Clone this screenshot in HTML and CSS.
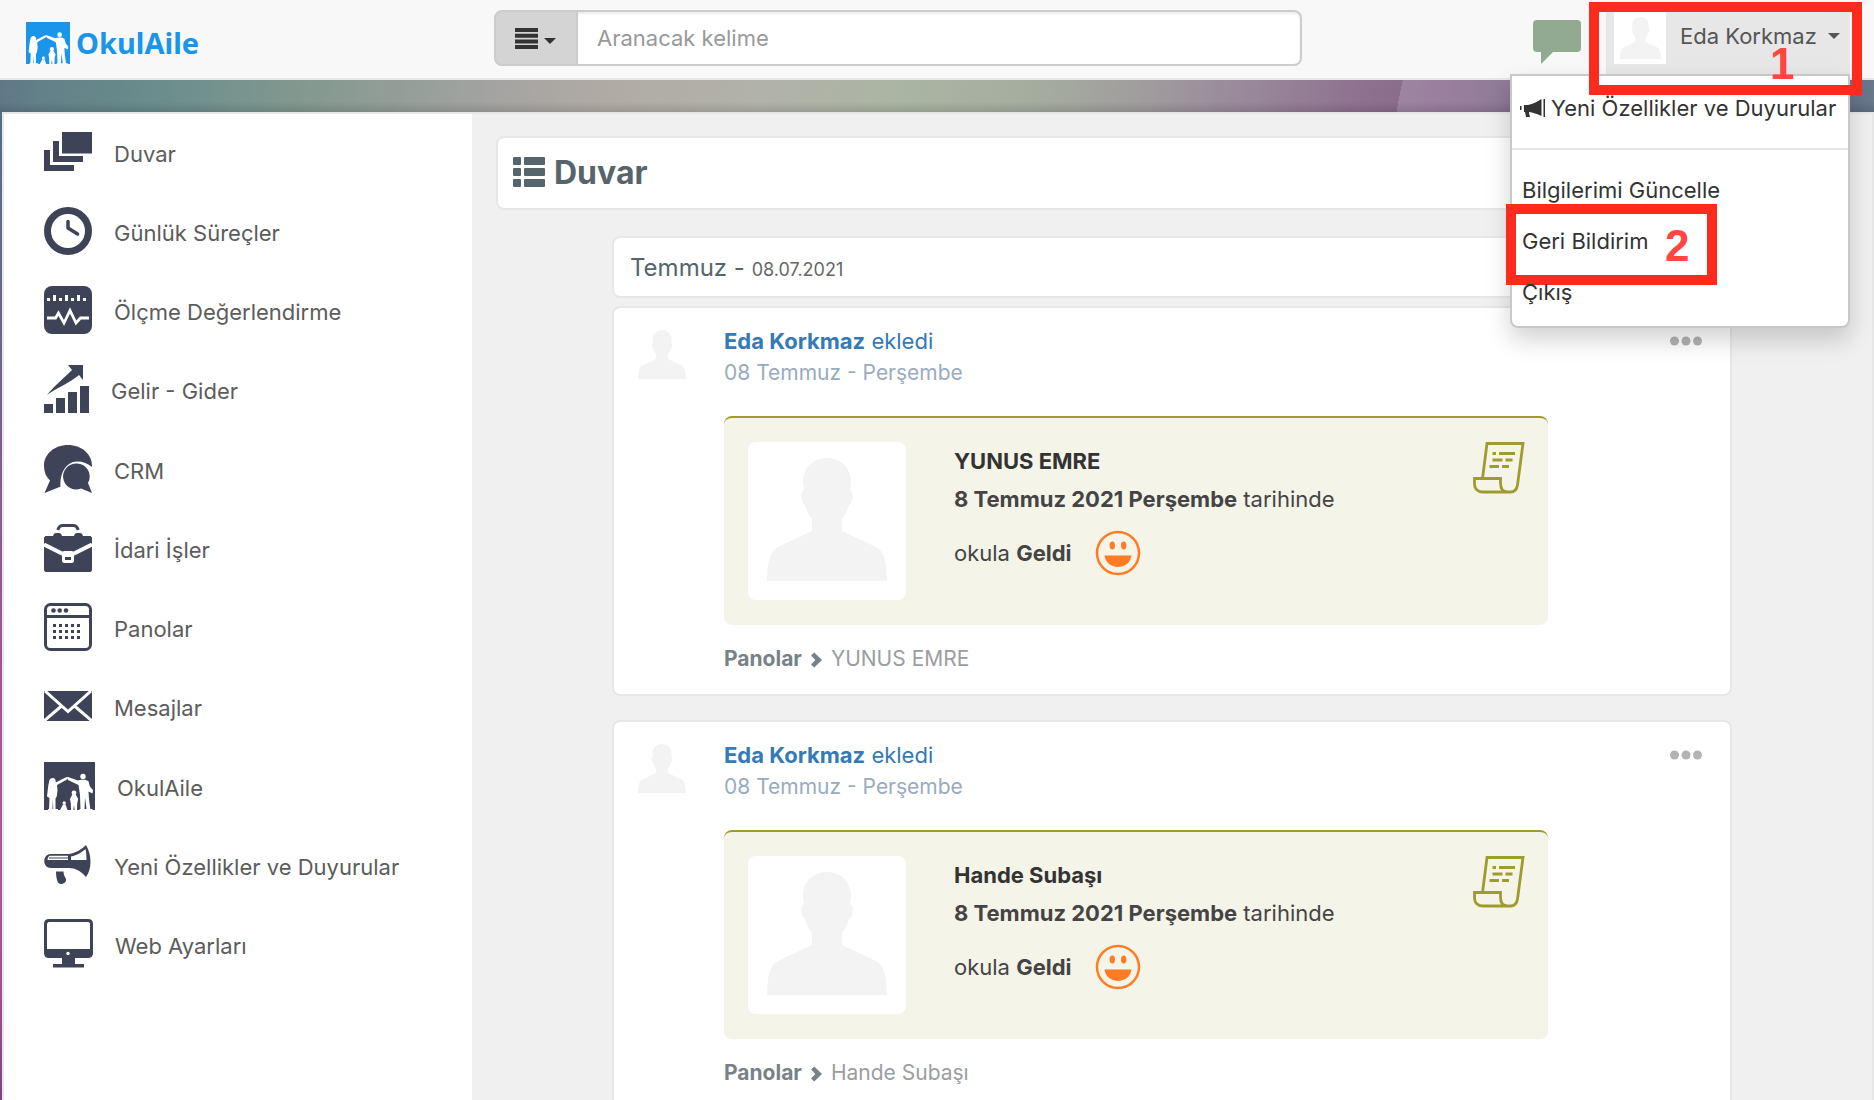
FILE: index.html
```html
<!DOCTYPE html>
<html lang="tr">
<head>
<meta charset="utf-8">
<meta name="viewport" content="width=device-width, initial-scale=1">
<title>OkulAile - Duvar</title>
<link rel="stylesheet" href="styles.css">
</head>
<body>
<svg class="sprite" aria-hidden="true">
  <symbol id="person" viewBox="0 0 120 123"><path d="M60 0C46 0 36 10 36 24L37 32C33 33 33 44 38 47C40 53 42 58 45 61V73L13 88C4 93 1 97 0 123H120C119 97 116 93 107 88L75 73V61C78 58 80 53 82 47C87 44 87 33 83 32L84 24C84 10 74 0 60 0Z"/></symbol>
  <symbol id="family" viewBox="0 0 51 48">
    <path fill="currentColor" d="M0 0h51v48H0z"/>
    <g fill="#fff">
      <path d="M8.500 16c2.500 0 3.500 2 3.200 4.500L22.500 15l1.700.8L23 17.500l-10 5.500.5 6-.8 5.500-1.200 2V48H9.300l-.4-10-.5 10H5l.5-12L3 34.500 4.200 24 5 20c.3-2.500 1.500-4 3.500-4z"/>
      <circle cx="39" cy="14.500" r="2.700"/>
      <path d="M23 15.500l1-.4L34 18.500l3-.8h4.500l3 1.500 1.500 5.500L49 28l-.5 3.500-4-2 .5 8L46.500 48h-3.800L41 35.500 40.500 48h-4L36 33l-1.500-10L24 18z"/>
      <circle cx="30" cy="31" r="2.400"/>
      <path d="M28 33h4l2.200 4-1 4.500L33 48h-2.400l-.6-5-.7 5H27l-.2-6.500L26 37z"/>
      <circle cx="20.200" cy="41" r="1.700"/>
      <path d="M19 42.500h2.500L23.500 48H16z"/>
      <path d="M4 47h10v1H4zM35.500 47h13v1h-13z"/>
    </g>
  </symbol>
  <symbol id="smile" viewBox="0 0 46 46">
    <circle cx="23" cy="23" r="21" fill="none" stroke="#ff7b24" stroke-width="2.500"/>
    <ellipse cx="17.300" cy="15.500" rx="2.700" ry="4" fill="#ff7b24"/><ellipse cx="28.700" cy="15.500" rx="2.700" ry="4" fill="#ff7b24"/>
    <path fill="#ff7b24" d="M9.500 25.500h27C36 32 30 37 23 37S10 32 9.500 25.500z"/>
  </symbol>
  <symbol id="scroll" viewBox="0 0 52 52">
    <path fill="none" stroke="#9f9c2e" stroke-width="2.800" d="M9.500 36.500L14 1.500h36L44.500 43c-.6 4-3 7-7 7H10c-5.500 0-8.500-3.500-8.500-8v-5.500h26V41c0 5.500 2.500 9 7 9"/>
    <path fill="none" stroke="#9f9c2e" stroke-width="3" d="M19.500 11.500h3.500M26 11.500h16M19.500 18h10M32.500 18h7M16.500 24.500h9.500M29 24.500h7"/>
  </symbol>
  <symbol id="dots" viewBox="0 0 32 10"><circle cx="4.500" cy="5" r="4.500"/><circle cx="16" cy="5" r="4.500"/><circle cx="27.500" cy="5" r="4.500"/></symbol>
  <symbol id="chevron" viewBox="0 0 11 16"><path d="M0 3.500L3.300.5 11 8l-7.700 7.500L0 12.500 4.300 8z"/></symbol>
</svg>

<header class="topbar">
  <a class="brand" href="#">
    <svg class="brand-icon" viewBox="0 0 51 48" preserveAspectRatio="none" aria-hidden="true"><use href="#family"/></svg>
    <span>OkulAile</span>
  </a>
  <form class="search">
    <button class="search-type" type="button" aria-label="Arama türü">
      <svg width="23" height="21" viewBox="0 0 23 21" aria-hidden="true"><path d="M0 0h23v4H0zM0 5.700h23v4H0zM0 11.400h23v4H0zM0 17h23v4H0z"/></svg>
      <span class="caret"></span>
    </button>
    <input class="search-input" type="text" placeholder="Aranacak kelime" aria-label="Aranacak kelime">
  </form>
  <div class="tools">
    <a class="chat" href="#" aria-label="Sohbet">
      <svg width="48" height="44" viewBox="0 0 48 44" aria-hidden="true"><path d="M4 0h40q4 0 4 4v24q0 4-4 4H20L8 44V32H4q-4 0-4-4V4q0-4 4-4z"/></svg>
    </a>
    <div class="user">
      <button class="user-button" type="button" aria-expanded="true">
        <span class="user-photo"><svg width="41" height="42" aria-hidden="true"><use href="#person"/></svg></span>
        <span class="user-name">Eda Korkmaz</span>
        <span class="caret"></span>
      </button>
      <ul class="menu">
        <li class="menu-news"><a href="#">
          <svg width="26" height="18" viewBox="0 0 26 18" aria-hidden="true"><path d="M0 7h1.500v4H0zM4 6h4C13 5 17 3 21.500 0v17C17 15 13 13.500 9 13v1l1 4H6l-1-5H4zM23.500 0H25v18h-1.500z"/></svg>
          Yeni Özellikler ve Duyurular</a></li>
        <li><a href="#">Bilgilerimi Güncelle</a></li>
        <li><a href="#">Geri Bildirim</a><span class="mark mark-two">2</span></li>
        <li><a href="#">Çıkış</a></li>
      </ul>
      <span class="mark mark-one">1</span>
    </div>
  </div>
</header>

<div class="backdrop">
<div class="page">
  <nav class="sidebar">
    <ul>
      <li><a href="#"><svg width="48" height="40" viewBox="0 0 48 40" aria-hidden="true"><path d="M18 0h30v21.500H18zM9 9h6v15h24v6H9zM0 18h6v15h24v6H0z"/></svg><span>Duvar</span></a></li>
      <li><a href="#"><svg width="48" height="48" viewBox="0 0 48 48" aria-hidden="true"><circle cx="24" cy="24" r="20.500" fill="none" stroke="currentColor" stroke-width="7"/><path d="M24 14.500V21l9.500 6" fill="none" stroke="currentColor" stroke-width="3.500" stroke-linecap="round" stroke-linejoin="round"/></svg><span>Günlük Süreçler</span></a></li>
      <li><a href="#"><svg width="48" height="48" viewBox="0 0 48 48" aria-hidden="true"><rect width="48" height="48" rx="8"/><path fill="#fff" d="M3 12h3v3H3zM9 9h3v6H9zM15 12h3v3h-3zM21 9h3v6h-3zM27 12h3v3h-3zM33 9h3v6h-3zM39 12h3v3h-3z"/><path d="M3 32h8.500l3-5 5.500 10 6-12.500 6 12.500 4.500-5H45" fill="none" stroke="#fff" stroke-width="2.800"/></svg><span>Ölçme Değerlendirme</span></a></li>
      <li><a href="#"><svg width="45" height="48" viewBox="0 0 45 48" aria-hidden="true"><path d="M0 39h9v9H0zM12 33h9v15h-9zM24 27h9v21h-9zM36 21h9v27h-9zM3 30C10 21 20 13 28 5l-4-5h15v15l-4-5C26 18 12 23 3 30z"/></svg><span>Gelir - Gider</span></a></li>
      <li><a href="#"><svg width="48" height="48" viewBox="0 0 48 48" aria-hidden="true"><path d="M24 0c13.500 0 24 9 24 20.500V24L30 41H18L.5 48 6 35.500C2 32 0 27 0 20.500 0 9 10.500 0 24 0z"/><path fill="#fff" d="M33 16.500c6 0 11 2 15 5.500V48H18c-5-14 2-31.500 15-31.500z"/><path d="M33 18.500a13 13 0 0 1 11 19.500l4 10-11-4.500A13 13 0 1 1 33 18.500z"/></svg><span>CRM</span></a></li>
      <li><a href="#"><svg width="48" height="48" viewBox="0 0 48 48" aria-hidden="true"><path d="M13.800 6c.8-3 2.500-4.500 5-4.500h10.400c2.500 0 4.200 1.500 5 4.500" fill="none" stroke="currentColor" stroke-width="3"/><path d="M1.500 12H9c.5-2 1.500-3 3-3h3c1.500 0 2.500 1 3 3h12c.5-2 1.500-3 3-3h3c1.500 0 2.500 1 3 3h7.500L48 13.500v33L46.500 48h-45L0 46.500v-33z"/><path d="M0 20.500l20 10M48 20.500l-20 10" stroke="#fff" stroke-width="4"/><rect x="18" y="27" width="12" height="12" rx="2.500" fill="#fff"/><path d="M21 33h6v3h-6z"/></svg><span>İdari İşler</span></a></li>
      <li><a href="#"><svg width="48" height="48" viewBox="0 0 48 48" aria-hidden="true"><rect x="1.500" y="1.500" width="45" height="45" rx="5" fill="none" stroke="currentColor" stroke-width="3"/><path d="M1 12h46v3H1z"/><circle cx="9.500" cy="7.500" r="2.300"/><circle cx="15.700" cy="7.500" r="2.300"/><circle cx="22" cy="7.500" r="2.300"/><path d="M9 22.500h28M9 28.500h28M9 34.500h28" stroke="currentColor" stroke-width="3" stroke-dasharray="3 3"/></svg><span>Panolar</span></a></li>
      <li><a href="#"><svg width="48" height="30" viewBox="0 0 48 30" aria-hidden="true"><path d="M0 0h48v30H0z"/><path d="M1 0l23 20.500L47 0M0 30l17.500-15M48 30L30.500 15" fill="none" stroke="#fff" stroke-width="3"/></svg><span>Mesajlar</span></a></li>
      <li><a href="#"><svg width="51" height="48" aria-hidden="true"><use href="#family"/></svg><span>OkulAile</span></a></li>
      <li><a href="#"><svg width="48" height="39" viewBox="0 0 48 39" aria-hidden="true"><path d="M7 9h18C32 8 38 4 42 0c6 10 6 24 0 32-5-6-11-9-17-9H7C-2 23-2 9 7 9z"/><path fill="#fff" d="M6 10.800h18V15H3.500c0-2 1-4 2.500-4.200zM27 11.500C33 10.500 38 7 41.500 4c.8 4 1 7 1 11H27z"/><path d="M5 13h19" stroke="currentColor" stroke-width="1"/><path d="M12 26.500h7.500c0 3 1.500 5.500 2.500 7.500 1 5-7 7-8.500 2.500-1-3-1.500-6-1.500-10z"/></svg><span>Yeni Özellikler ve Duyurular</span></a></li>
      <li><a href="#"><svg width="49" height="49" viewBox="0 0 49 49" aria-hidden="true"><path d="M5 0h39q5 0 5 5v29q0 5-5 5H31v6h9v3.500H9V45h9v-6H5q-5 0-5-5V5q0-5 5-5z"/><path fill="#fff" d="M4.500 3h40L46 4.500V30H3V4.500z"/><circle cx="24" cy="34.500" r="1.700" fill="#fff"/></svg><span>Web Ayarları</span></a></li>
    </ul>
  </nav>

  <main class="content">
    <h1 class="card title">
      <svg width="32" height="30" viewBox="0 0 32 30" aria-hidden="true"><rect width="8" height="8" rx="1"/><rect x="11" width="21" height="8" rx="1"/><rect y="11" width="8" height="8" rx="1"/><rect x="11" y="11" width="21" height="8" rx="1"/><rect y="22" width="8" height="8" rx="1"/><rect x="11" y="22" width="21" height="8" rx="1"/></svg>
      Duvar
    </h1>
    <div class="feed">
      <h2 class="card period">Temmuz - <small>08.07.2021</small></h2>

      <article class="card post">
        <svg class="post-avatar" width="48" height="49" aria-hidden="true"><use href="#person"/></svg>
        <div class="post-main">
          <a class="post-author" href="#"><b>Eda Korkmaz</b> ekledi</a>
          <div class="post-date">08 Temmuz - Perşembe</div>
          <div class="notice">
            <div class="notice-photo"><svg width="120" height="123" aria-hidden="true"><use href="#person"/></svg></div>
            <div class="notice-text">
              <p class="notice-name">YUNUS EMRE</p>
              <p><b>8 Temmuz 2021 Perşembe</b> tarihinde</p>
              <p class="notice-status"><span>okula <b>Geldi</b></span><svg width="46" height="46" aria-hidden="true"><use href="#smile"/></svg></p>
            </div>
            <svg class="notice-icon" width="52" height="52" aria-hidden="true"><use href="#scroll"/></svg>
          </div>
          <div class="trail"><b>Panolar</b><svg width="11" height="16" aria-hidden="true"><use href="#chevron"/></svg><a href="#">YUNUS EMRE</a></div>
        </div>
        <button class="more" type="button" aria-label="Seçenekler"><svg width="32" height="10" aria-hidden="true"><use href="#dots"/></svg></button>
      </article>

      <article class="card post">
        <svg class="post-avatar" width="48" height="49" aria-hidden="true"><use href="#person"/></svg>
        <div class="post-main">
          <a class="post-author" href="#"><b>Eda Korkmaz</b> ekledi</a>
          <div class="post-date">08 Temmuz - Perşembe</div>
          <div class="notice">
            <div class="notice-photo"><svg width="120" height="123" aria-hidden="true"><use href="#person"/></svg></div>
            <div class="notice-text">
              <p class="notice-name">Hande Subaşı</p>
              <p><b>8 Temmuz 2021 Perşembe</b> tarihinde</p>
              <p class="notice-status"><span>okula <b>Geldi</b></span><svg width="46" height="46" aria-hidden="true"><use href="#smile"/></svg></p>
            </div>
            <svg class="notice-icon" width="52" height="52" aria-hidden="true"><use href="#scroll"/></svg>
          </div>
          <div class="trail"><b>Panolar</b><svg width="11" height="16" aria-hidden="true"><use href="#chevron"/></svg><a href="#">Hande Subaşı</a></div>
        </div>
        <button class="more" type="button" aria-label="Seçenekler"><svg width="32" height="10" aria-hidden="true"><use href="#dots"/></svg></button>
      </article>
    </div>
  </main>
</div>
</div>
</body>
</html>
```
FILE: styles.css
```css
* { box-sizing: border-box; }
html, body { height: 100%; }
body {
  margin: 0;
  display: flex;
  flex-direction: column;
  overflow: hidden;
  font-family: Inter, "Liberation Sans", sans-serif;
  font-size: 22px;
  color: #444;
}
ul, p, h1, h2 { margin: 0; padding: 0; }
ul { list-style: none; }
a { color: inherit; text-decoration: none; }
button { font: inherit; color: inherit; border: 0; padding: 0; background: none; cursor: pointer; }
svg { display: block; flex: none; fill: currentColor; }
.sprite { position: absolute; width: 0; height: 0; }
.caret { border: 6px solid transparent; border-top-color: currentColor; border-bottom: 0; }

/* Top bar */
.topbar {
  flex: none;
  display: grid;
  grid-template-columns: 494px 1fr 572px;
  align-items: center;
  height: 80px;
  padding-bottom: 2px;
  background: #f8f8f8;
  border-bottom: 2px solid #e7e7e7;
}
.brand {
  display: flex;
  align-items: center;
  gap: 6px;
  padding: 10px 0 0 26px;
  color: #1b95ea;
  font: bold 29px/42px "Noto Sans", sans-serif;
}
.brand-icon { width: 44px; height: 42px; }
.search { display: flex; height: 56px; }
.search-type {
  display: flex;
  align-items: center;
  gap: 6px;
  width: 84px;
  padding-left: 19px;
  color: #333;
  background: #d4d4d4;
  border: 2px solid #ccc;
  border-radius: 8px 0 0 8px;
}
.search-type .caret { margin-top: 6px; }
.search-input {
  flex: 1;
  min-width: 0;
  padding: 0 19px;
  font: inherit;
  color: #555;
  background: #fff;
  border: 2px solid #ccc;
  border-left: 0;
  border-radius: 0 8px 8px 0;
  box-shadow: inset 0 2px 2px rgba(0, 0, 0, .075);
}
.search-input::placeholder { color: #999; opacity: 1; }
.tools { display: flex; justify-content: flex-end; align-items: center; gap: 25px; padding-right: 24px; }
.chat { color: #92aa92; padding-top: 8px; }
.user { position: relative; z-index: 10; }
.user-button {
  display: flex;
  align-items: center;
  width: 244px;
  height: 72px;
  padding: 0 10px 4px 8px;
  color: #555;
  background: #e7e7e7;
}
.user-photo { display: flex; justify-content: center; align-items: center; width: 52px; height: 52px; margin-top: 4px; color: #f3f3f3; background: #fff; }
.user-name { flex: 1; padding-left: 14px; text-align: left; }
.menu {
  position: absolute;
  top: 72px;
  right: 0;
  width: 340px;
  padding: 10px 0 8px;
  color: #333;
  background: #fff;
  border: 2px solid #c8c8c8;
  border-radius: 0 0 8px 8px;
  box-shadow: 0 12px 24px rgba(0, 0, 0, .175);
}
.menu li { position: relative; }
.menu a { display: block; padding-left: 10px; line-height: 51px; white-space: nowrap; }
.menu .menu-news { padding-bottom: 18px; margin-bottom: 15px; border-bottom: 2px solid #e5e5e5; }
.menu .menu-news a { display: flex; align-items: center; gap: 5px; padding-left: 8px; line-height: 44px; }

/* Numbered callouts */
.mark {
  position: absolute;
  border: 10px solid #fd2b1d;
  color: #ff4640;
  font: bold 44px/44px "Liberation Sans", Arial, sans-serif;
  pointer-events: none;
}
.mark-one { left: -17px; top: 0; width: 273px; height: 93px; padding: 30px 0 0 171px; }
.mark-two { left: -6px; top: -12px; width: 211px; height: 81px; padding: 10px 0 0 149px; }

/* Page shell */
.backdrop {
  flex: 1;
  min-height: 0;
  padding: 32px 0 0 2px;
  background:
    linear-gradient(rgba(0, 0, 0, 0) 22px, rgba(0, 0, 0, .12) 32px) 0 0 / 100% 32px no-repeat,
    linear-gradient(101deg, #5f7888 0%, #628088 2%, #6b8e8d 9%, #82988f 16%, #a3a3a1 26%, #b0aaa5 32%, #b2b2a9 40%, #abb5a3 48%, #a5ad9f 55%, #a09c9e 61%, #98869a 67%, #8f7390 72%, #8a6c8b 74.600%, #9d85a0 74.600%, #9a7f9f 77%, #8f7b98 80%, #66758a 99%, #6a788a 100%) 0 0 / 100% 32px no-repeat,
    linear-gradient(#4f7180, #6b6590 24%, #9a5596 54%, #a85a9c 76%, #9a4f95 90%, #7d4386);
}
.page {
  display: flex;
  height: 100%;
  background: #f0f0f0;
  border: 2px solid #e7e7e7;
  border-bottom: 0;
}
.sidebar { flex: none; width: 468px; background: #fff; color: #5c5c5c; }
.sidebar a { display: flex; align-items: center; gap: 22px; height: 79px; padding: 0 0 4px 40px; }
.sidebar li:nth-child(4n) a { height: 80px; }
.sidebar svg { color: #3e4357; }
.sidebar span { padding-top: 4px; }

/* Content */
.content { flex: 1; min-width: 0; padding: 22px 24px 0; overflow: hidden; }
.card { background: #fff; border: 2px solid #e7e7e7; border-radius: 8px; }
.title {
  display: flex;
  align-items: center;
  gap: 9px;
  height: 74px;
  padding: 0 0 2px 15px;
  color: #56646b;
  font-size: 32px;
  font-weight: 700;
}
.feed { margin: 26px 116px 0; }
.period { height: 62px; margin-bottom: 8px; padding-left: 16px; color: #56646b; font-size: 24px; font-weight: 400; line-height: 60px; }
.period small { color: #666; font-size: 18px; }
.post { display: grid; grid-template-columns: 48px 1fr 32px; column-gap: 38px; align-items: start; margin-bottom: 24px; padding: 18px 28px 20px 24px; }
.post-avatar { margin-top: 4px; color: #f3f3f3; }
.post-main { min-width: 0; margin-right: 84px; }
.post-author { display: block; color: #337ab7; line-height: 31px; }
.post-date { color: #9aabbf; font-size: 21px; line-height: 31px; }
.notice { display: flex; align-items: flex-start; margin-top: 28px; padding: 24px 23px 25px 24px; background: #f5f4e8; border-top: 2px solid #9f9c2e; border-radius: 8px; }
.notice-photo { display: flex; justify-content: center; align-items: flex-start; width: 158px; height: 158px; padding-top: 16px; color: #f3f3f3; background: #fff; border-radius: 8px; }
.notice-text { flex: 1; padding-left: 48px; line-height: 38px; }
.notice-name { color: #333; font-weight: 700; }
.notice-status { display: flex; align-items: center; gap: 23px; height: 70px; }
.trail { display: flex; align-items: center; gap: 9px; margin-top: 19px; color: #778287; font-size: 21px; line-height: 30px; }
.trail svg { margin-top: 2px; }
.trail a { color: #999ea2; }
.more { margin-top: 10px; color: #b3b3b3; }
```
